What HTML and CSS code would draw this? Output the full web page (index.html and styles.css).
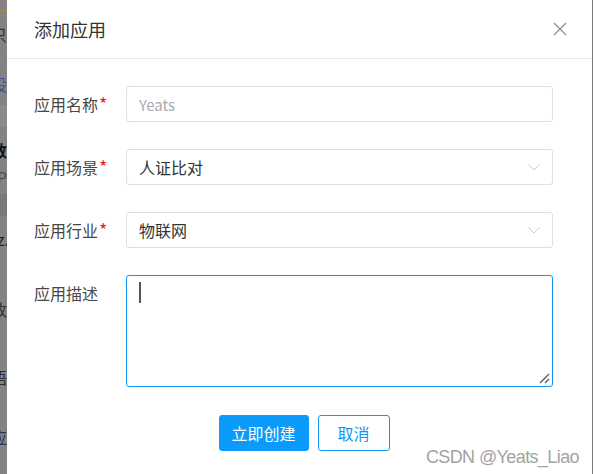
FILE: index.html
```html
<!DOCTYPE html>
<html lang="zh">
<head>
<meta charset="utf-8">
<title>添加应用</title>
<link rel="stylesheet" href="styles.css">
</head>
<body>
<div class="page">
  <div class="backdrop-left">
    <div class="bg-line bg-orange"></div>
    <div class="bg-text t1"><span>只</span></div>
    <div class="bg-text t2"><span>设</span></div>
    <div class="bg-band"></div>
    <div class="bg-text t3"><span>数</span></div>
    <div class="bg-text t4"><span>P</span></div>
    <div class="bg-band dark"></div>
    <div class="bg-text t5"><span>z.</span></div>
    <div class="bg-text t6"><span>改</span></div>
    <div class="bg-text t7"><span>语</span></div>
    <div class="bg-text t8"><span>应</span></div>
  </div>

  <div class="dialog">
    <div class="dialog-header">
      <span class="dialog-title">添加应用</span>
      <svg class="close-icon" width="14" height="14" viewBox="0 0 14 14">
        <path d="M1 1 L13 13 M13 1 L1 13" stroke="#8c8f95" stroke-width="1.3" fill="none"/>
      </svg>
    </div>

    <div class="dialog-body">
      <div class="form-row">
        <label class="form-label">应用名称<span class="req">*</span></label>
        <div class="input"><span class="placeholder">Yeats</span></div>
      </div>
      <div class="form-row">
        <label class="form-label">应用场景<span class="req">*</span></label>
        <div class="input select">
          <span class="value">人证比对</span>
          <svg class="chevron" width="12" height="7" viewBox="0 0 12 7">
            <path d="M0.5 0.5 L6 6 L11.5 0.5" stroke="#c8cbd1" stroke-width="1" fill="none"/>
          </svg>
        </div>
      </div>
      <div class="form-row">
        <label class="form-label">应用行业<span class="req">*</span></label>
        <div class="input select">
          <span class="value">物联网</span>
          <svg class="chevron" width="12" height="7" viewBox="0 0 12 7">
            <path d="M0.5 0.5 L6 6 L11.5 0.5" stroke="#c8cbd1" stroke-width="1" fill="none"/>
          </svg>
        </div>
      </div>
      <div class="form-row">
        <label class="form-label">应用描述</label>
        <div class="textarea">
          <span class="caret"></span>
          <svg class="resize" width="11" height="11" viewBox="0 0 11 11">
            <path d="M1 10 L10 1 M6 10 L10 6" stroke="#555" stroke-width="1.3" fill="none"/>
          </svg>
        </div>
      </div>

      <div class="actions">
        <button class="btn btn-primary">立即创建</button>
        <button class="btn btn-plain">取消</button>
      </div>
    </div>
    <div class="watermark">CSDN @Yeats_Liao</div>
  </div>

  <div class="backdrop-right"></div>
</div>
</body>
</html>
```

FILE: styles.css
```css
* { box-sizing: border-box; }

html, body {
  margin: 0;
  padding: 0;
  width: 593px;
  height: 474px;
  overflow: hidden;
  background: #808080;
  font-family: "Noto Sans CJK SC", "Noto Sans", sans-serif;
}

.page {
  display: flex;
  width: 593px;
  height: 474px;
}

.backdrop-left {
  width: 7px;
  flex: none;
  background: #838383;
  overflow: hidden;
  display: flex;
  flex-direction: column;
}

.bg-line { height: 1px; width: 7px; }
.bg-orange { background: #a88a3c; margin-top: 10px; }

.bg-text {
  height: 18px;
  line-height: 18px;
  font-size: 16px;
  white-space: nowrap;
  color: #2c2c2c;
}
.bg-text span { display: inline-block; margin-left: -9px; }
.t1 { margin-top: 14px; color: #4a2a2a; }
.t2 { margin-top: 32px; color: #3a5590; }
.t3 { margin-top: 48px; color: #111; font-weight: 700; }
.t4 { margin-top: 9px; color: #5b4a40; }
.t4 span { margin-left: -3px; }
.t5 { margin-top: 44px; color: #222; }
.t5 span { margin-left: -3px; }
.t6 { margin-top: 52px; color: #333; }
.t7 { margin-top: 50px; color: #2c2c40; }
.t8 { margin-top: 42px; color: #2a3565; }

.bg-band { height: 22px; background: #8a8a8a; margin-top: 12px; margin-bottom: -34px; }
.bg-band.dark { background: #7a7a7a; margin-top: 8px; margin-bottom: -30px; }

.backdrop-right {
  width: 1px;
  flex: none;
  background: #7a7a7a;
}

.dialog {
  flex: 1;
  background: #fff;
  position: relative;
  display: flex;
  flex-direction: column;
}

.dialog-header {
  height: 59px;
  flex: none;
  border-bottom: 1px solid #e6e6e6;
  display: flex;
  align-items: center;
  justify-content: space-between;
  padding: 0 25px 1px 27px;
}

.dialog-title {
  font-size: 18px;
  color: #333;
  line-height: 24px;
}

.close-icon { display: block; }

.dialog-body {
  padding: 27px 39px 0 27px;
  display: flex;
  flex-direction: column;
  gap: 27px;
}

.form-row {
  display: flex;
  align-items: flex-start;
}

.form-label {
  width: 92px;
  height: 36px;
  flex: none;
  font-size: 16px;
  line-height: 36px;
  color: #474747;
  white-space: nowrap;
}

.req {
  color: #f01c2a;
  font-size: 18px;
  line-height: 1;
  margin-left: 1px;
}

.input {
  flex: 1;
  height: 36px;
  border: 1px solid #dcdfe6;
  border-radius: 3px;
  padding: 0 12px 0 12px;
  display: flex;
  align-items: center;
  font-size: 16px;
}

.placeholder { color: #a8abb2; font-size: 15px; }
.value { color: #333; }

.select { justify-content: space-between; }
.chevron { display: block; margin-right: 0; }

.textarea {
  flex: 1;
  height: 112px;
  border: 1px solid #1296f2;
  border-radius: 3px;
  position: relative;
  padding: 6px 12px;
}

.caret {
  display: block;
  width: 2px;
  height: 21px;
  background: #555;
}

.resize {
  position: absolute;
  right: 2px;
  bottom: 2px;
  display: block;
}

.actions {
  display: flex;
  justify-content: center;
  gap: 9px;
  margin-top: 1px;
  padding-left: 21px;
}

.btn {
  height: 36px;
  border-radius: 3px;
  font-family: "Noto Sans CJK SC", sans-serif;
  font-size: 16px;
  padding: 0;
  cursor: pointer;
}

.btn-primary {
  width: 90px;
  background: #0a9afa;
  border: 1px solid #0a9afa;
  color: #fff;
}

.btn-plain {
  width: 72px;
  background: #fff;
  border: 1px solid #1296f2;
  color: #1296f2;
}

.watermark {
  position: absolute;
  right: 13px;
  bottom: 6px;
  font-family: "Liberation Sans", Arial, sans-serif;
  font-size: 18px;
  letter-spacing: -0.6px;
  color: #a3a3a3;
  line-height: 22px;
}
```
